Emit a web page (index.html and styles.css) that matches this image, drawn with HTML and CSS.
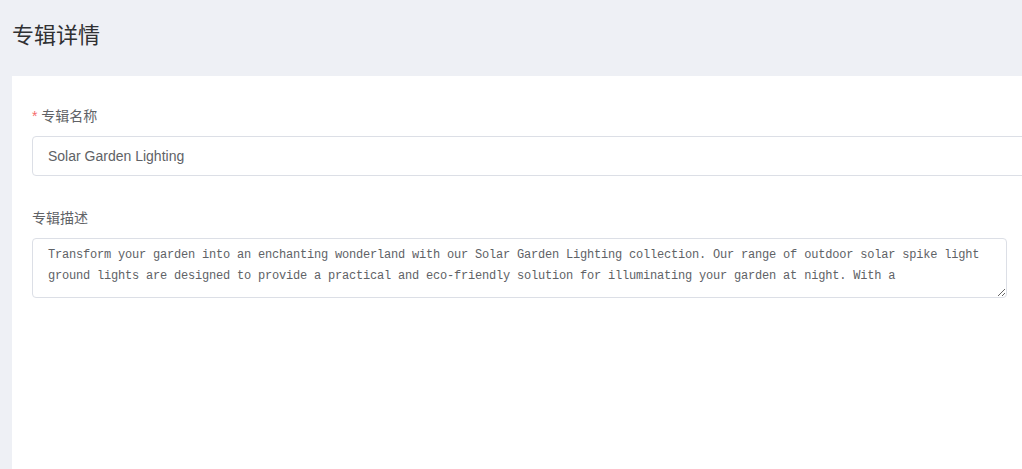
FILE: index.html
```html
<!DOCTYPE html>
<html lang="zh">
<head>
<meta charset="utf-8">
<title>专辑详情</title>
<link rel="stylesheet" href="styles.css">
</head>
<body>
<div class="page">
  <h1 class="title">专辑详情</h1>
  <div class="card">
    <div class="field">
      <label class="label"><span class="req">*</span> 专辑名称</label>
      <input class="input" type="text" value="Solar Garden Lighting">
    </div>
    <div class="field field-desc">
      <label class="label">专辑描述</label>
      <textarea class="textarea" rows="2">Transform your garden into an enchanting wonderland with our Solar Garden Lighting collection. Our range of outdoor solar spike light ground lights are designed to provide a practical and eco-friendly solution for illuminating your garden at night. With a</textarea>
    </div>
  </div>
</div>
</body>
</html>
```

FILE: styles.css
```css
html, body {
  margin: 0;
  padding: 0;
  overflow: hidden;
  background: #eef0f5;
  height: 100%;
}
.page {
  box-sizing: border-box;
  padding: 0 0 0 12px;
  height: 100%;
  display: flex;
  flex-direction: column;
  font-family: "Liberation Sans", "Noto Sans CJK SC", sans-serif;
}
.title {
  margin: 0;
  padding: 21px 0 25px 0;
  font-size: 22px;
  line-height: 30px;
  font-weight: normal;
  color: #303133;
}
.card {
  flex: 1;
  background: #fff;
  padding: 30px 0 20px 20px;
  overflow: hidden;
}
.field {
  display: flex;
  flex-direction: column;
  align-items: flex-start;
  gap: 10px;
}
.field-desc {
  margin-top: 32px;
}
.label {
  font-size: 14px;
  line-height: 20px;
  color: #606266;
}
.req {
  color: #f56c6c;
}
.input {
  box-sizing: border-box;
  height: 40px;
  width: calc(100% + 40px);
  border: 1px solid #dcdfe6;
  border-radius: 4px;
  padding: 0 15px;
  font-family: "Liberation Sans", "Noto Sans CJK SC", sans-serif;
  font-size: 14px;
  color: #606266;
  outline: none;
}
.textarea {
  box-sizing: border-box;
  width: 975px;
  height: 60px;
  border: 1px solid #dcdfe6;
  border-radius: 4px;
  padding: 6px 15px 4px;
  font-family: "Liberation Mono", monospace;
  font-size: 12px;
  letter-spacing: -0.2px;
  line-height: 21px;
  color: #606266;
  outline: none;
  resize: vertical;
  overflow: hidden;
}
```
